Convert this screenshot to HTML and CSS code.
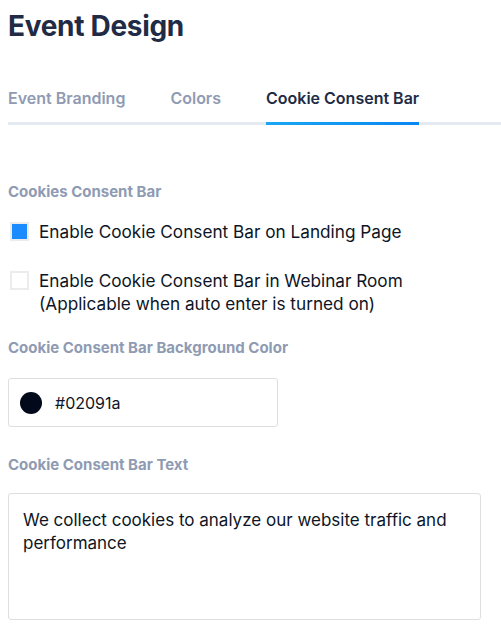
FILE: index.html
```html
<!DOCTYPE html>
<html>
<head>
<meta charset="utf-8">
<link rel="stylesheet" href="styles.css">
</head>
<body>
<div class="page">
  <h1 class="title">Event Design</h1>
  <nav class="tabs">
    <div class="tab">Event Branding</div>
    <div class="tab">Colors</div>
    <div class="tab active">Cookie Consent Bar</div>
  </nav>
  <section class="section">
    <div class="label">Cookies Consent Bar</div>
    <label class="check">
      <span class="box checked"></span>
      <span class="check-text">Enable Cookie Consent Bar on Landing Page</span>
    </label>
    <label class="check">
      <span class="box"></span>
      <span class="check-text">Enable Cookie Consent Bar in Webinar Room<br>(Applicable when auto enter is turned on)</span>
    </label>
    <div class="label label-color">Cookie Consent Bar Background Color</div>
    <div class="color-input">
      <span class="swatch"></span>
      <span class="color-value">#02091a</span>
    </div>
    <div class="label label-text">Cookie Consent Bar Text</div>
    <div class="textarea">We collect cookies to analyze our website traffic and performance</div>
  </section>
</div>
</body>
</html>
```
FILE: styles.css
```css
html, body {
  background: #ffffff;
}
body {
  margin: 0;
  font-family: "Inter", "Open Sans", sans-serif;
  color: #0d1526;
}
.page {
  padding: 8px 0 0 8px;
}
.title {
  margin: 0;
  font-size: 28px;
  line-height: 36px;
  font-weight: 700;
  color: #222b45;
  letter-spacing: -0.3px;
}
.tabs {
  display: flex;
  gap: 45px;
  margin-top: 44px;
  border-bottom: 3px solid #e4e9f2;
}
.tab {
  font-size: 16px;
  font-weight: 600;
  color: #8f9bb3;
  line-height: 20px;
  padding-bottom: 14px;
  margin-bottom: -3px;
  border-bottom: 3px solid transparent;
}
.tab.active {
  color: #222b45;
  border-image: linear-gradient(90deg, #1ba6f2, #0a86f0) 1;
}
.section {
  padding-top: 57px;
}
.label {
  font-size: 15px;
  font-weight: 700;
  color: #8f9bb3;
  line-height: 20px;
}
.check {
  display: flex;
  gap: 10px;
  align-items: flex-start;
  margin-top: 18px;
}
.check + .check {
  margin-top: 26px;
}
.box {
  flex: none;
  width: 15px;
  height: 15px;
  border: 2px solid #ececec;
  margin: 2px 0 0 2px;
  background: #fff;
}
.box.checked {
  background: #1a8cff;
}
.check-text {
  font-size: 17.2px;
  line-height: 23px;
  color: #0d1526;
}
.label-color {
  margin-top: 23px;
}
.color-input {
  margin-top: 20px;
  width: 270px;
  height: 49px;
  border: 1px solid #dedede;
  border-radius: 3px;
  display: flex;
  align-items: center;
  gap: 13px;
  padding-left: 11px;
  box-sizing: border-box;
}
.swatch {
  width: 22px;
  height: 22px;
  border-radius: 50%;
  background: #02091a;
}
.color-value {
  font-size: 16px;
  color: #0d1526;
}
.label-text {
  margin-top: 28px;
}
.textarea {
  margin-top: 18px;
  width: 442px;
  height: 95px;
  border: 1px solid #dedede;
  border-radius: 3px;
  padding: 15px 15px 15px 14px;
  font-size: 17px;
  line-height: 23px;
  color: #0d1526;
}
```
